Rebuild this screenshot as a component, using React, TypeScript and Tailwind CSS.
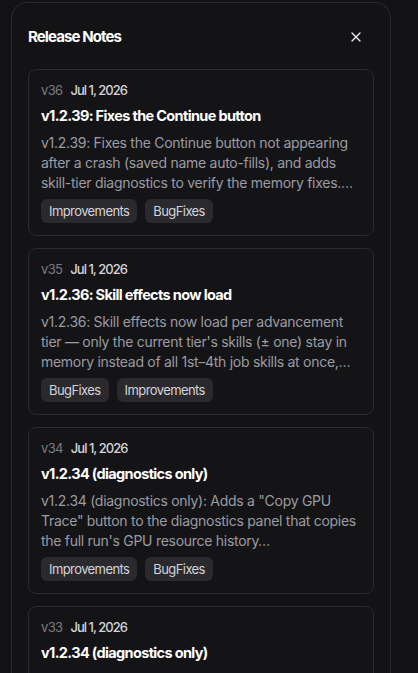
import { X } from "lucide-react";

interface Note {
  version: string;
  date: string;
  title: string;
  body: string;
  tags: string[];
}

const notes: Note[] = [
  {
    version: "v36",
    date: "Jul 1, 2026",
    title: "v1.2.39: Fixes the Continue button",
    body: "v1.2.39: Fixes the Continue button not appearing after a crash (saved name auto-fills), and adds skill-tier diagnostics to verify the memory fixes.…",
    tags: ["Improvements", "BugFixes"],
  },
  {
    version: "v35",
    date: "Jul 1, 2026",
    title: "v1.2.36: Skill effects now load",
    body: "v1.2.36: Skill effects now load per advancement tier — only the current tier's skills (± one) stay in memory instead of all 1st–4th job skills at once,…",
    tags: ["BugFixes", "Improvements"],
  },
  {
    version: "v34",
    date: "Jul 1, 2026",
    title: "v1.2.34 (diagnostics only)",
    body: "v1.2.34 (diagnostics only): Adds a \"Copy GPU Trace\" button to the diagnostics panel that copies the full run's GPU resource history…",
    tags: ["Improvements", "BugFixes"],
  },
  {
    version: "v33",
    date: "Jul 1, 2026",
    title: "v1.2.34 (diagnostics only)",
    body: "v1.2.34 (diagnostics only): Adds diagnostics for tracking GPU resource usage across the full run…",
    tags: ["Improvements"],
  },
];

function NoteCard({ note }: { note: Note }) {
  return (
    <div className="rounded-lg border border-[#2a2a2f] bg-[#141417] p-3">
      <div className="flex items-center gap-2 text-[13px] leading-4">
        <span className="tracking-[-0.05em] text-[#7a7a82]">{note.version}</span>
        <span className="font-medium tracking-[-0.075em] text-[#d4d4d8]">{note.date}</span>
      </div>
      <h3 className="mt-2 text-[14.5px] font-bold leading-5 tracking-[-0.045em] text-white">{note.title}</h3>
      <p className="mt-[7px] text-[14px] leading-5 tracking-[-0.02em] text-[#9b9ba2]">{note.body}</p>
      <div className="mt-[6px] flex gap-2">
        {note.tags.map((t) => (
          <span
            key={t}
            className="rounded-md bg-[#29292e] px-2 text-[13px] leading-6 tracking-[-0.045em] text-[#d4d4d8]"
          >
            {t}
          </span>
        ))}
      </div>
    </div>
  );
}

export default function App() {
  return (
    <div
      className="h-[673px] overflow-hidden bg-[#121215] pt-[2px] pl-[11px]"
      style={{ fontFamily: "Inter, 'Noto Sans', sans-serif" }}
    >
      <div className="w-[380px] rounded-t-2xl border border-b-0 border-[#2a2a2f] bg-[#131316] px-4 pt-6">
        <div className="flex h-5 items-center justify-between">
          <h2 className="text-[15px] font-bold tracking-[-0.06em] text-white">Release Notes</h2>
          <button className="mr-[10px] text-[#e4e4e7]" aria-label="Close">
            <X size={16} strokeWidth={2} />
          </button>
        </div>
        <div className="mt-[22px] flex flex-col gap-3">
          {notes.map((n) => (
            <NoteCard key={n.version} note={n} />
          ))}
        </div>
      </div>
    </div>
  );
}
